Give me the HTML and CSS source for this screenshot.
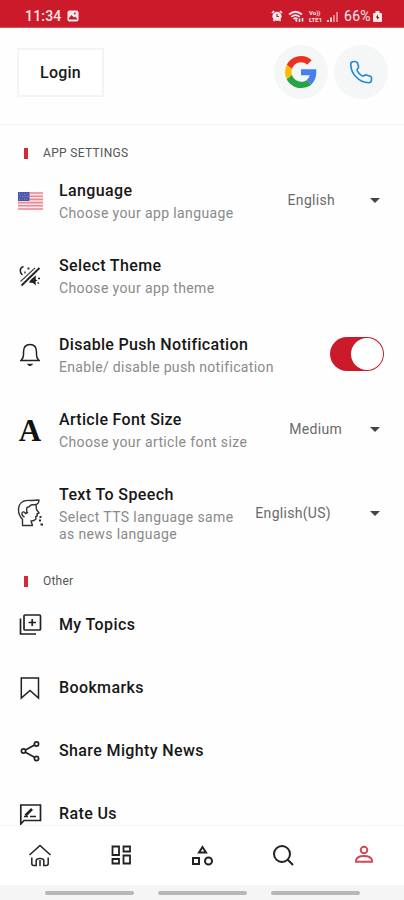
FILE: index.html
```
<!DOCTYPE html>
<html lang="en">
<head>
<meta charset="utf-8">
<title>Settings</title>
<link rel="stylesheet" href="styles.css">
</head>
<body>
<div class="app">
  <div class="status">
    <span class="time">11:34</span>
    <svg class="photo" width="12" height="12" viewBox="0 0 12 12"><rect x=".5" y=".5" width="11" height="11" rx="2" fill="#fde8ea"/><path d="M2 9.500V8l2.500-3L7 7.500l1-1L10 8.500V9.500z" fill="#cb1b2b"/><circle cx="7.800" cy="3.500" r="1" fill="#cb1b2b"/></svg>
    <div class="indicators">
      <svg width="12" height="12" viewBox="0 0 12 12"><circle cx="6" cy="6.300" r="4.600" fill="#fde8ea"/><path d="M1 3l2-2M11 3L9 1M2.500 11l1.500-2M9.500 11L8 9" stroke="#fde8ea" stroke-width="1.700"/><path d="M6 4v2.500h2" fill="none" stroke="#cb1b2b" stroke-width="1.200"/></svg>
      <svg class="wifi" width="17" height="13" viewBox="0 0 17 13"><path d="M1 4.500Q7.500-1 14 4.500M3.300 6.800q4.200-3.500 8.400 0M5.500 9q2-1.600 4 0" fill="none" stroke="#fde8ea" stroke-width="1.700"/><path d="M7.500 9.500l1.500 2M11.500 12V8.500M14.500 8v3.500" stroke="#fde8ea" stroke-width="1.600"/></svg>
      <div class="volte"><span>Vo))</span><span>LTE1</span></div>
      <svg class="signal" width="11" height="11" viewBox="0 0 11 11"><path d="M1 11V9M4 11V6.500" stroke="#fbdde0" stroke-width="1.800"/><path d="M7 11V4M10 11V1" stroke="#e58e97" stroke-width="1.800"/></svg>
      <span class="percent">66%</span>
      <svg width="9" height="11" viewBox="0 0 9 11"><path d="M2.500 0h4v2H8q1 0 1 1v7q0 1-1 1H1q-1 0-1-1V3q0-1 1-1h1.500z" fill="#fde8ea"/><path d="M5 3.500L2.800 6.500h1.400v2.300L6.500 6H5z" fill="#6d1720"/></svg>
    </div>
  </div>

  <header class="header">
    <button class="login">Login</button>
    <div class="round">
      <svg width="32" height="32" viewBox="0 0 48 48"><path fill="#ea3223" d="M24 9.500c3.540 0 6.710 1.220 9.210 3.600l6.850-6.850C35.900 2.380 30.470 0 24 0 14.620 0 6.510 5.380 2.560 13.220l7.980 6.190C12.430 13.720 17.740 9.500 24 9.500z"/><path fill="#4580ee" d="M46.980 24.550c0-1.570-.150-3.090-.380-4.550H24v9.020h12.940c-.580 2.960-2.260 5.480-4.780 7.180l7.730 6c4.510-4.180 7.090-10.360 7.090-17.650z"/><path fill="#fbbc05" d="M10.530 28.590A14.500 14.500 0 0 1 9.770 24c0-1.600.270-3.140.760-4.590l-7.980-6.190A24 24 0 0 0 0 24c0 3.880.920 7.540 2.560 10.780z"/><path fill="#27a244" d="M24 48c6.480 0 11.930-2.130 15.890-5.810l-7.730-6C30.010 37.640 27.240 38.500 24 38.500c-6.260 0-11.570-4.220-13.470-9.910l-7.980 6.190C6.510 42.620 14.620 48 24 48z"/></svg>
    </div>
    <div class="round">
      <svg class="phone" width="25" height="25" viewBox="0 0 26 26" fill="none" stroke="#2386dc" stroke-width="1.700" stroke-linejoin="round"><path d="M2.500 2.500q1-1 3.300-1t2.900 1.200l1.200 4q.3 1.300-.9 2.300-1 .9-.4 2.200 1.800 3.600 5 5.300 1.200.6 2-.2 1-1 2.300-.7l4.200 1.400q1.500.5 1.400 2l-.2 2q-.3 2.700-2.600 2.700-8-.3-13.200-6Q2 12.500 1.800 4.500q0-1.200.7-2z"/></svg>
    </div>
  </header>

  <main class="content">
    <h2 class="section"><i></i><span class="caps">APP SETTINGS</span></h2>

    <div class="row">
      <div class="icon"><svg width="25" height="18" viewBox="0 0 25 18"><path fill="#fbe7e8" d="M0 0h25v18H0z"/><path stroke="#ee8790" stroke-width="1.600" d="M0 1h25M0 4.200h25M0 7.400h25M0 10.600h25M0 13.800h25M0 17h25"/><path fill="#4b57a8" d="M0 0h11.500v9H0z"/><path stroke="#8b94cc" stroke-dasharray="1 1.500" d="M1 2h10M2 4.500h9M1 7h10"/></svg></div>
      <div class="copy"><h3>Language</h3><p>Choose your app language</p></div>
      <div class="select"><span>English</span><b></b></div>
    </div>

    <div class="row">
      <div class="icon"><svg width="24" height="24" viewBox="0 0 24 24"><path d="M3.500 21.500L21.500 4" stroke="#222" stroke-width="1.800"/><path d="M2.500 17.500L17 4" stroke="#444" stroke-width="1.100"/><path d="M5.500 2.500Q1.500 4 2.500 8q.5 2 2 3" fill="none" stroke="#222" stroke-width="1.500"/><path d="M10.500 3.500v2M9.500 4.500h2M7 7.500v2" stroke="#222" stroke-width="1.300"/><path d="M11 18.500q1-3 7-7l-.3 4 1.800 1-2 1 .5 4-3-2.500z" fill="#222"/><path d="M20 14.500h2M19.500 18.500l1.500 1" stroke="#222" stroke-width="1.300"/></svg></div>
      <div class="copy"><h3>Select Theme</h3><p>Choose your app theme</p></div>
    </div>

    <div class="row push">
      <div class="icon"><svg width="24" height="26" viewBox="0 0 24 26" fill="none" stroke="#222" stroke-width="1.500"><path d="M2 18.500h20M3.500 18q2-2.500 2-5V10q0-7.500 6.500-7.500T18.500 10v3q0 2.500 2 5"/><path d="M9.500 22.300h5l-2.500 1.500z" fill="#222" stroke-width="1"/></svg></div>
      <div class="copy"><h3 class="snug">Disable Push Notification</h3><p class="snug">Enable/ disable push notification</p></div>
      <div class="toggle"><i></i></div>
    </div>

    <div class="row">
      <div class="icon letter">A</div>
      <div class="copy"><h3 class="snug">Article Font Size</h3><p>Choose your article font size</p></div>
      <div class="select"><span class="medium">Medium</span><b></b></div>
    </div>

    <div class="row speech">
      <div class="icon"><svg width="28" height="28" viewBox="0 0 28 28" fill="none" stroke="#333" stroke-width="1.400" stroke-linejoin="round"><path d="M6.500 26.500v-6Q2.500 16 2.500 11 2.500 5 7 2.500q3-1.500 8-1l8-.5q0 4-3.500 4.500L15 6q-1.500 2-4 2.500-1 4 .5 5l-2 1q-2-3-3.500-.5-.5 3 2.500 4"/><path d="M20 5.500l.5 5 2.500 3.500-2 1 .2 2-1.500.7.3 2.300-2 1.500-3 .5 1.500 4.500H6"/><path d="M23.500 18.500l2-1M23 21.500h2M24.500 25.500h2.500" stroke="#222" stroke-width="1.800"/></svg></div>
      <div class="copy"><h3>Text To Speech</h3><p>Select TTS language same<br>as news language</p></div>
      <div class="select"><span class="us">English(US)</span><b></b></div>
    </div>

    <h2 class="section other"><i></i><span>Other</span></h2>

    <div class="item"><div class="icon"><svg width="24" height="24" viewBox="0 0 24 24" fill="none" stroke="#222" stroke-width="1.700"><rect x="6" y="2" width="16.500" height="15" rx="1"/><path d="M2.500 5.500v15.500H18M10.500 9.500h7.500M14.200 6v7"/></svg></div><h3>My Topics</h3></div>
    <div class="item"><div class="icon"><svg width="24" height="24" viewBox="0 0 24 24" fill="none" stroke="#222" stroke-width="1.500"><path d="M3.300 2h17.200v20L12 14.500 3.300 22z"/></svg></div><h3>Bookmarks</h3></div>
    <div class="item"><div class="icon"><svg width="24" height="24" viewBox="0 0 24 24" fill="none" stroke="#222" stroke-width="1.700"><circle cx="5.500" cy="12" r="2.100"/><circle cx="18.500" cy="5" r="2.100"/><circle cx="18.500" cy="19.500" r="2.100"/><path d="M7.500 11l9-5M7.500 13.200l9 5"/></svg></div><h3>Share Mighty News</h3></div>
    <div class="item"><div class="icon"><svg width="24" height="24" viewBox="0 0 24 24" fill="none" stroke="#222" stroke-width="1.700"><path d="M2.800 3h19.700v15.500H6L2.800 22z"/><path d="M7.500 13.500l6.500-6.500" stroke-width="2.600"/><path d="M6 14.500h4M12 14.500h6" stroke-width="1.500"/></svg></div><h3>Rate Us</h3></div>
  </main>

  <nav class="tabs">
    <svg width="24" height="26" viewBox="0 0 24 26" fill="none" stroke="#222" stroke-width="1.500"><path d="M1.500 12L12 2.500 22.500 12"/><path d="M3.800 14.500v6q0 2 2 2h2.400v-5q0-2 3.800-2t3.800 2v5h2.400q2 0 2-2v-6M12 17v6"/></svg>
    <svg width="24" height="26" viewBox="0 0 24 26" fill="none" stroke="#222" stroke-width="1.800"><path d="M3.500 3.500h6.500v8.500H3.500zM14.500 3.500h6.500v5h-6.500zM3.500 16h6.500v4.500H3.500zM14.500 12.500h6.500v8h-6.500z"/></svg>
    <svg width="24" height="26" viewBox="0 0 24 26" fill="none" stroke="#222" stroke-width="2"><path d="M12.500 4L9 9.500h7zM3 15h6v6H3z"/><circle cx="18.500" cy="18" r="3.500"/></svg>
    <svg width="24" height="26" viewBox="0 0 24 26" fill="none" stroke="#222" stroke-width="2"><circle cx="11" cy="11" r="8"/><path d="M16.500 16.500l5.500 5.500"/></svg>
    <svg width="24" height="26" viewBox="0 0 24 26" fill="none" stroke="#d04a56" stroke-width="1.900"><circle cx="12" cy="7" r="3.300"/><path d="M4 18.800v-1.500q1-4.300 8-4.300t8 4.300v1.500z"/></svg>
  </nav>
  <div class="system"><i></i><i></i><i></i></div>
</div>
</body>
</html>
```
FILE: styles.css
```
* { box-sizing: border-box; margin: 0; padding: 0; }
body { width: 404px; height: 900px; overflow: hidden; background: #fefefe; font-family: Roboto, sans-serif; color: #171717; }
.app { height: 900px; display: flex; flex-direction: column; overflow: hidden; }
.app > * { flex-shrink: 0; }
svg, i, b { display: block; }

.status { height: 28px; display: flex; align-items: center; background: #cb1b2b; color: #fde8ea; padding: 5px 22px 0 25px; border-bottom: 1px solid #d9515d; }
.time { font-size: 14px; font-weight: 500; width: 42px; letter-spacing: .2px; }
.indicators { margin-left: auto; display: flex; align-items: center; }
.wifi { margin-left: 5px; }
.volte { margin-left: 4px; width: 15px; display: flex; flex-direction: column; font-size: 6px; line-height: 7px; font-weight: 700; }
.signal { margin-left: 3px; }
.percent { font-size: 14px; margin-left: 6px; width: 29px; letter-spacing: .3px; }

.header { height: 97px; padding: 17px 16px 0 17px; display: flex; gap: 6px; border-bottom: 1px solid #f4f4f4; }
.login { width: 87px; height: 49px; margin: 3px auto 0 0; background: #fff; border: 2px solid #f4f4f4; font: 500 16px Roboto, sans-serif; letter-spacing: .2px; color: #1a1a1a; }
.round { width: 54px; height: 54px; border-radius: 50%; background: #f5f6f6; display: flex; align-items: center; justify-content: center; }

.content { height: 700px; overflow: hidden; }
.section { height: 38px; padding: 18px 0 0 24px; display: flex; align-items: flex-start; gap: 15px; font-size: 12px; line-height: 20px; font-weight: 400; letter-spacing: .2px; color: #555; }
.caps { letter-spacing: .33px; }
.section i { width: 4px; height: 11px; margin-top: 5px; background: #d22b36; }
.row { height: 75px; padding: 18px 24px 0 18px; display: flex; }
.push { height: 79px; padding: 22px 20px 0 18px; }
.speech { height: 85px; }
.icon { width: 24px; height: 24px; margin-right: 17px; display: flex; align-items: center; justify-content: center; flex-shrink: 0; }
.row .icon { margin-top: 8px; }
.speech .icon { margin-top: 16px; }
.icon svg { flex-shrink: 0; }
.letter { font: 700 31px "Liberation Serif", serif; color: #111; }
.row .letter { margin-top: 9px; }
.copy { flex: 1; white-space: nowrap; }
h3 { font-size: 16px; line-height: 20px; font-weight: 500; letter-spacing: .38px; white-space: nowrap; }
h3.snug { letter-spacing: .32px; }
.copy p { margin-top: 4px; font-size: 14px; line-height: 17px; color: #8a8a8a; letter-spacing: .38px; }
.copy p.snug { letter-spacing: .32px; }
.select { height: 20px; margin-top: 9px; display: flex; align-items: center; font-size: 14px; color: #6a6a6a; letter-spacing: .3px; }
.speech .select { margin-top: 18px; }
.select b { width: 0; height: 0; border: 5px solid transparent; border-top-color: #454545; border-bottom: 0; }
.select span { margin-right: 35px; }
.select .medium { margin-right: 28px; }
.select .us { margin-right: 39px; }
.toggle { width: 54px; height: 34px; margin-top: 2px; border-radius: 17px; background: #cb1b2b; display: flex; justify-content: flex-end; padding: 1px; }
.toggle i { width: 32px; height: 32px; border-radius: 50%; background: #fff; }
.other { height: 41px; padding-top: 19px; }
.item { height: 63px; padding-left: 18px; display: flex; align-items: center; }

.tabs { height: 60px; display: grid; grid-template-columns: repeat(5, 1fr); justify-items: center; align-items: center; background: #fff; border-top: 1px solid #f6f6f6; }
.system { height: 15px; background: #f5f5f5; display: flex; justify-content: center; gap: 24px; padding-top: 6px; }
.system i { width: 89px; height: 4px; border-radius: 2px; background: #b7b7b7; }
```
